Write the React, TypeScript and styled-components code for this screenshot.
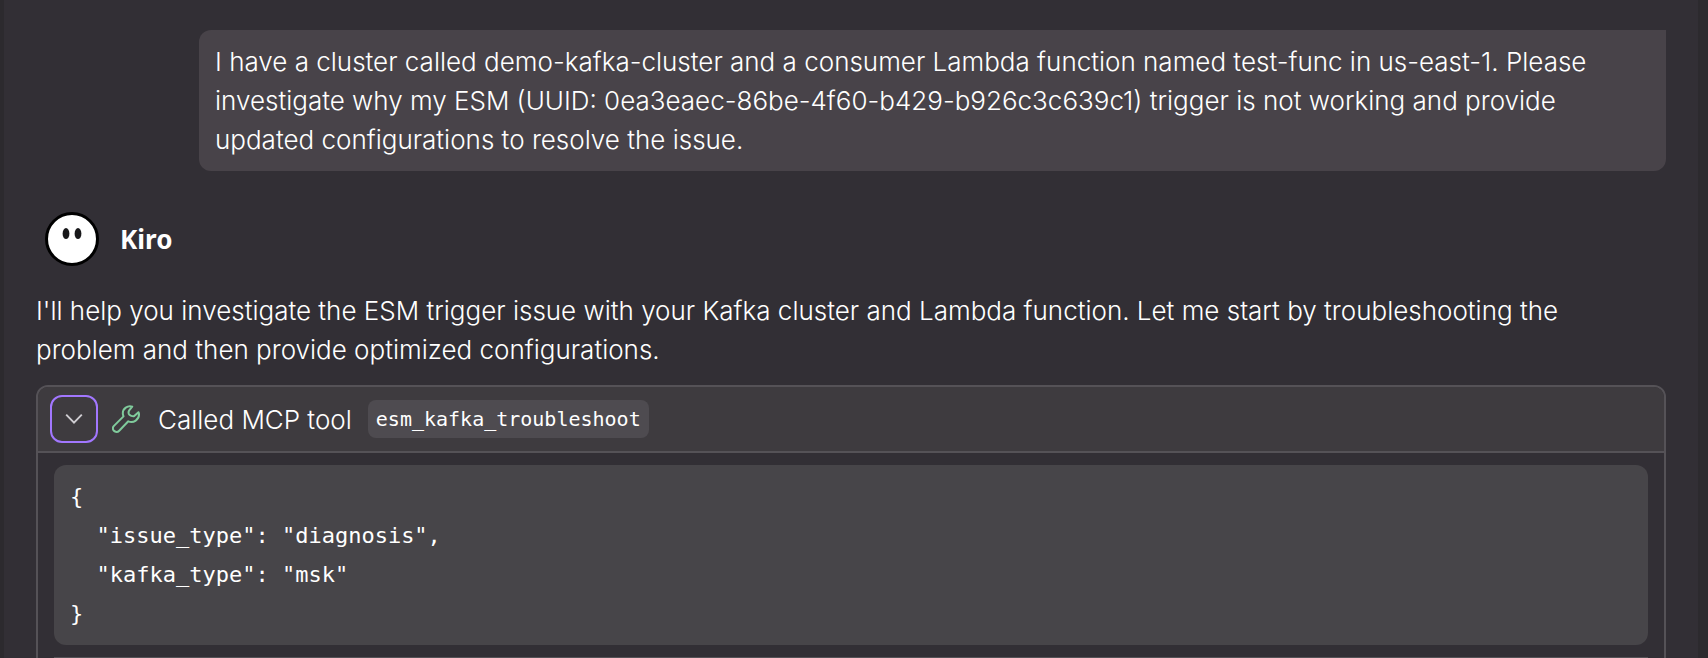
import React from "react";
import styled, { createGlobalStyle } from "styled-components";

const GlobalStyle = createGlobalStyle`
  * { box-sizing: border-box; }
  body { margin: 0; background: #2c2a2e; }
`;

const sans = `Inter, "Noto Sans", sans-serif`;
const mono = `"DejaVu Sans Mono", monospace`;

const Frame = styled.div`
  height: 100vh;
  overflow: hidden;
  padding: 0 10px 0 4px;
  background: #2c2a2e;
`;

const Chat = styled.main`
  min-height: 100%;
  padding: 30px 32px 0;
  background: #322f35;
  color: #fff;
  font: 300 26px/39px ${sans};
`;

const UserMessage = styled.p`
  margin: 0 0 41px 163px;
  padding: 12px 16px;
  border-radius: 12px 0 12px 12px;
  background: #484349;
`;

const Author = styled.header`
  display: flex;
  align-items: center;
  gap: 21px;
  margin-bottom: 25px;
  padding-left: 9px;
`;

const Avatar = styled.svg`
  width: 54px;
  height: 54px;
`;

const AuthorName = styled.strong`
  font-family: "Noto Sans", sans-serif;
  font-weight: 700;
`;

const Reply = styled.p`
  margin: 0 0 16px;
  padding-right: 16px;
`;

const ToolCard = styled.section`
  border: 2px solid #555257;
  border-radius: 12px;
`;

const ToolHeader = styled.header`
  display: flex;
  align-items: center;
  height: 66px;
  padding: 0 12px;
  border-bottom: 2px solid #555257;
  border-radius: 10px 10px 0 0;
  background: #3e3b3f;
`;

const Toggle = styled.button`
  display: grid;
  place-items: center;
  width: 48px;
  height: 48px;
  padding: 0;
  border: 2px solid #a277ff;
  border-radius: 12px;
  background: transparent;
  color: #cfcdd2;
`;

const ToolIcon = styled.svg`
  width: 28px;
  height: 28px;
  margin: 0 18px 0 14px;
  color: #80cb9c;
`;

const ToolName = styled.code`
  margin-left: 16px;
  padding: 0 8px;
  border-radius: 8px;
  background: #4e4b50;
  font: 400 20px/38px ${mono};
`;

const ToolBody = styled.div`
  display: grid;
  gap: 12px;
  padding: 12px 16px;
`;

const CodeBlock = styled.pre`
  margin: 0;
  padding: 12px 16px;
  border-radius: 12px;
  background: #474549;
  font: 400 22px/39px ${mono};
`;

const Divider = styled.hr`
  width: 100%;
  margin: 0;
  border: 0;
  border-top: 2px solid #555257;
`;

const args = `{
  "issue_type": "diagnosis",
  "kafka_type": "msk"
}`;

export default function App() {
  return (
    <Frame>
      <GlobalStyle />
      <Chat>
        <UserMessage>
          I have a cluster called demo-kafka-cluster and a consumer Lambda function named test-func in us-east-1. Please
          investigate why my ESM (UUID: 0ea3eaec-86be-4f60-b429-b926c3c639c1) trigger is not working and provide updated
          configurations to resolve the issue.
        </UserMessage>
        <Author>
          <Avatar viewBox="0 0 54 54" aria-hidden="true">
            <circle cx="27" cy="27" r="25.5" fill="#fff" stroke="#000" strokeWidth="3" />
            <ellipse cx="21" cy="21.6" rx="3.4" ry="5.5" fill="#18181a" />
            <ellipse cx="33" cy="21.6" rx="3.4" ry="5.5" fill="#18181a" />
          </Avatar>
          <AuthorName>Kiro</AuthorName>
        </Author>
        <Reply>
          I'll help you investigate the ESM trigger issue with your Kafka cluster and Lambda function. Let me start by
          troubleshooting the problem and then provide optimized configurations.
        </Reply>
        <ToolCard>
          <ToolHeader>
            <Toggle type="button" aria-label="Collapse tool call" aria-expanded="true">
              <svg width="18" height="12" viewBox="0 0 18 12" fill="none" stroke="currentColor" strokeWidth="1.9">
                <path d="M1.2 1.6 9 9.6l7.8-8" />
              </svg>
            </Toggle>
            <ToolIcon
              viewBox="0 0 28 28"
              fill="none"
              stroke="currentColor"
              strokeWidth="2"
              strokeLinejoin="round"
              strokeLinecap="round"
              aria-hidden="true"
            >
              <path d="M20.2 1.6C15.600 0.200 10.800 3.500 10.800 8.300C10.800 9.400 11.100 10.400 11.500 11.400L2.200 20.600C0.600 22.200 0.600 24.300 1.900 25.800C3.300 27.300 5.700 27.300 7.200 25.700L16.300 16.300C21.500 18.500 27.300 14.600 27 9C27 8.300 26.800 7.800 26.500 7.200L22.200 11.100C20.900 11.700 17.500 10.600 16.900 9.200C16.400 7.800 16.500 6.200 17.200 5.300Z" />
            </ToolIcon>
            <span>Called MCP tool</span>
            <ToolName>esm_kafka_troubleshoot</ToolName>
          </ToolHeader>
          <ToolBody>
            <CodeBlock>{args}</CodeBlock>
            <Divider />
          </ToolBody>
        </ToolCard>
      </Chat>
    </Frame>
  );
}
